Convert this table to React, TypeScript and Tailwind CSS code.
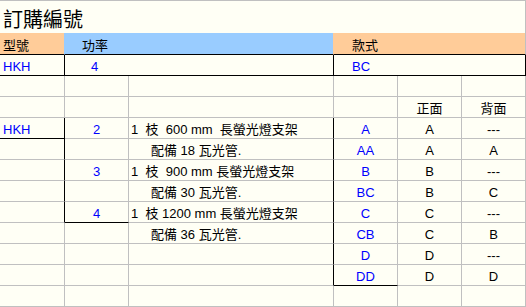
const GRAY = "border-[#c0c0c0]";

type CellProps = {
  text?: string;
  span?: string;
  r?: string;
  b?: string;
  cls?: string;
};

const Cell = ({ text = "", span = "", r = "border-r-[#c0c0c0]", b = "border-b-[#c0c0c0]", cls = "" }: CellProps) => (
  <div className={`${span} border-r border-b ${r} ${b} pt-[2px] leading-[20px] whitespace-pre overflow-hidden ${cls}`}>
    {text}
  </div>
);

const BLK_R = "border-r-black";
const BLK_B = "border-b-black";

type Row = {
  c0?: string;
  c1?: string;
  c2?: string;
  c3?: string;
  c4?: string;
  c5?: string;
  r0?: boolean;
  b0?: boolean;
  b1?: boolean;
  r2?: boolean;
  b3?: boolean;
  indent?: boolean;
};

const rows: Row[] = [
  {},
  { c4: "正面", c5: "背面" },
  { c0: "HKH", c1: "2", c2: "1  枝  600 mm  長螢光燈支架", c3: "A", c4: "A", c5: "---", r0: true, b0: true, r2: true },
  { c2: "配備 18 瓦光管.", indent: true, c3: "AA", c4: "A", c5: "A", r0: true, r2: true },
  { c1: "3", c2: "1  枝  900 mm 長螢光燈支架", c3: "B", c4: "B", c5: "---", r0: true, r2: true },
  { c2: "配備 30 瓦光管.", indent: true, c3: "BC", c4: "B", c5: "C", r0: true, r2: true },
  { c1: "4", c2: "1  枝 1200 mm 長螢光燈支架", c3: "C", c4: "C", c5: "---", r0: true, b1: true, r2: true },
  { c2: "配備 36 瓦光管.", indent: true, c3: "CB", c4: "C", c5: "B", r2: true },
  { c3: "D", c4: "D", c5: "---", r2: true },
  { c3: "DD", c4: "D", c5: "D", r2: true, b3: true },
  {},
];

export default function App() {
  return (
    <div
      className="w-[526px] h-[307px] overflow-hidden bg-[#fffff5] text-[13px] text-black"
      style={{ fontFamily: '"Liberation Sans", "Noto Sans CJK TC", sans-serif' }}
    >
      <div className="grid grid-cols-[65px_64px_205px_64px_64px_64px] grid-rows-[33px_22px_repeat(12,21px)]">
        {/* title */}
        <div className={`col-span-6 border-t border-r ${GRAY} pl-[3px] pt-[9px] text-[20px] leading-[20px]`}>
          訂購編號
        </div>

        {/* header */}
        <div className="border-r border-b border-r-[#99ccff] border-b-black bg-[#ffcc99] pl-[3px] pt-[3px] leading-[20px]">
          型號
        </div>
        <div className="col-span-2 border-r border-b border-r-[#ffcc99] border-b-black bg-[#99ccff] pl-[17px] pt-[3px] leading-[20px]">
          功率
        </div>
        <div className="col-span-3 border-r border-b border-r-[#c0c0c0] border-b-black bg-[#ffcc99] pl-[18px] pt-[3px] leading-[20px]">
          款式
        </div>

        {/* selected order */}
        <Cell text="HKH" r={BLK_R} b={BLK_B} cls="pl-[3px] text-[#0000ff]" />
        <Cell text="4" span="col-span-2" r={BLK_R} b={BLK_B} cls="pl-[26px] text-[#0000ff]" />
        <Cell text="BC" span="col-span-3" r={BLK_R} b={BLK_B} cls="pl-[18px] text-[#0000ff]" />

        {/* model table */}
        {rows.map((row, i) => (
          <div key={i} className="contents">
            <Cell
              text={row.c0}
              r={row.r0 ? BLK_R : undefined}
              b={row.b0 ? BLK_B : undefined}
              cls="pl-[3px] text-[#0000ff]"
            />
            <Cell text={row.c1} b={row.b1 ? BLK_B : undefined} cls="text-center text-[#0000ff]" />
            <Cell
              text={row.c2}
              r={row.r2 ? BLK_R : undefined}
              cls={row.indent ? "pl-[22px]" : "pl-[2px]"}
            />
            <Cell text={row.c3} b={row.b3 ? BLK_B : undefined} cls="text-center text-[#0000ff]" />
            <Cell text={row.c4} cls="text-center" />
            <Cell text={row.c5} cls="text-center" />
          </div>
        ))}
      </div>
    </div>
  );
}
